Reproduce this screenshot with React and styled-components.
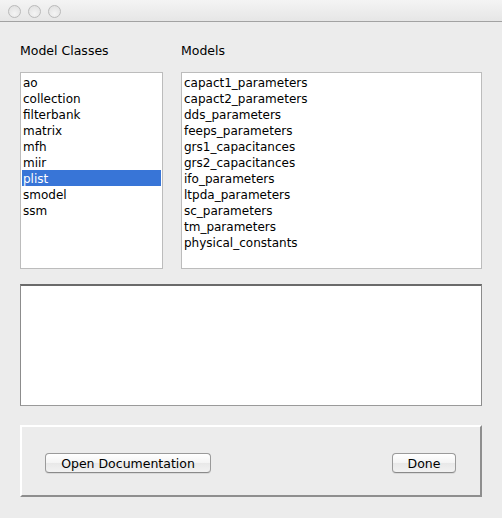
import React, { useState } from "react";
import styled, { createGlobalStyle } from "styled-components";

const GlobalStyle = createGlobalStyle`
  html, body {
    margin: 0;
    padding: 0;
    background: #ececec;
  }
  body {
    font-family: "DejaVu Sans", "Liberation Sans", sans-serif;
    font-size: 12px;
    color: #000;
  }
`;

const classes = ["ao", "collection", "filterbank", "matrix", "mfh", "miir", "plist", "smodel", "ssm"];

const models = [
  "capact1_parameters",
  "capact2_parameters",
  "dds_parameters",
  "feeps_parameters",
  "grs1_capacitances",
  "grs2_capacitances",
  "ifo_parameters",
  "ltpda_parameters",
  "sc_parameters",
  "tm_parameters",
  "physical_constants",
];

const Window = styled.div`
  width: 502px;
  height: 518px;
  background: #ececec;
  overflow: hidden;
`;

const TitleBar = styled.div`
  height: 21px;
  border-bottom: 1px solid #a2a2a2;
  background: linear-gradient(#f4f4f4, #e6e6e6);
  display: flex;
  align-items: center;
  gap: 7px;
  padding-left: 8px;
`;

const Light = styled.span`
  width: 11px;
  height: 11px;
  border-radius: 50%;
  border: 1px solid #bababa;
  background: radial-gradient(circle at 50% 70%, #f4f4f4, #dedede);
  margin-top: 1px;
`;

const Body = styled.div`
  padding: 0 20px;
`;

const Columns = styled.div`
  display: grid;
  grid-template-columns: 143px 301px;
  column-gap: 18px;
  padding-top: 20px;
`;

const Column = styled.div`
  display: flex;
  flex-direction: column;
`;

const Label = styled.div`
  height: 16px;
  line-height: 16px;
  padding-top: 1px;
  margin-bottom: 13px;
  font-size: 12.5px;
`;

const ListBox = styled.div`
  height: 193px;
  background: #fff;
  border: 1px solid #bcbcbc;
  padding: 1px;
  overflow: hidden;
`;

const Row = styled.div`
  height: 16px;
  line-height: 18px;
  padding-left: 1px;
  white-space: nowrap;
  background: ${(p) => (p.$selected ? "#3875d7" : "transparent")};
  color: ${(p) => (p.$selected ? "#fff" : "#000")};
`;

const TextArea = styled.div`
  margin-top: 15px;
  height: 119px;
  background: #fff;
  border: 1px solid #8c8c8c;
  border-top: 2px solid #6a6a6a;
  border-bottom-color: #9a9a9a;
`;

const ButtonPanel = styled.div`
  margin-top: 19px;
  height: 72px;
  box-sizing: border-box;
  border: 2px solid;
  border-color: #fff #8e8e8e #8e8e8e #fff;
  display: flex;
  justify-content: space-between;
  align-items: flex-start;
  padding: 26px 24px 0 23px;
`;

const Button = styled.button`
  height: 20px;
  width: ${(p) => p.$width}px;
  padding: 0;
  font-family: "DejaVu Sans", "Liberation Sans", sans-serif;
  font-size: 12.5px;
  color: #000;
  border: 1px solid #9a9a9a;
  border-bottom-color: #8a8a8a;
  border-radius: 4px;
  background: linear-gradient(#ffffff, #f4f4f4 50%, #e8e8e8 51%, #f2f2f2);
  box-shadow: 0 1px 0 rgba(0, 0, 0, 0.08);
`;

export default function App() {
  const [selected, setSelected] = useState("plist");
  const [model, setModel] = useState(null);

  return (
    <Window>
      <GlobalStyle />
      <TitleBar>
        <Light />
        <Light />
        <Light />
      </TitleBar>
      <Body>
        <Columns>
          <Column>
            <Label>Model Classes</Label>
            <ListBox>
              {classes.map((c) => (
                <Row key={c} $selected={c === selected} onClick={() => setSelected(c)}>
                  {c}
                </Row>
              ))}
            </ListBox>
          </Column>
          <Column>
            <Label>Models</Label>
            <ListBox>
              {models.map((m) => (
                <Row key={m} $selected={m === model} onClick={() => setModel(m)}>
                  {m}
                </Row>
              ))}
            </ListBox>
          </Column>
        </Columns>
        <TextArea />
        <ButtonPanel>
          <Button $width={166}>Open Documentation</Button>
          <Button $width={64}>Done</Button>
        </ButtonPanel>
      </Body>
    </Window>
  );
}
